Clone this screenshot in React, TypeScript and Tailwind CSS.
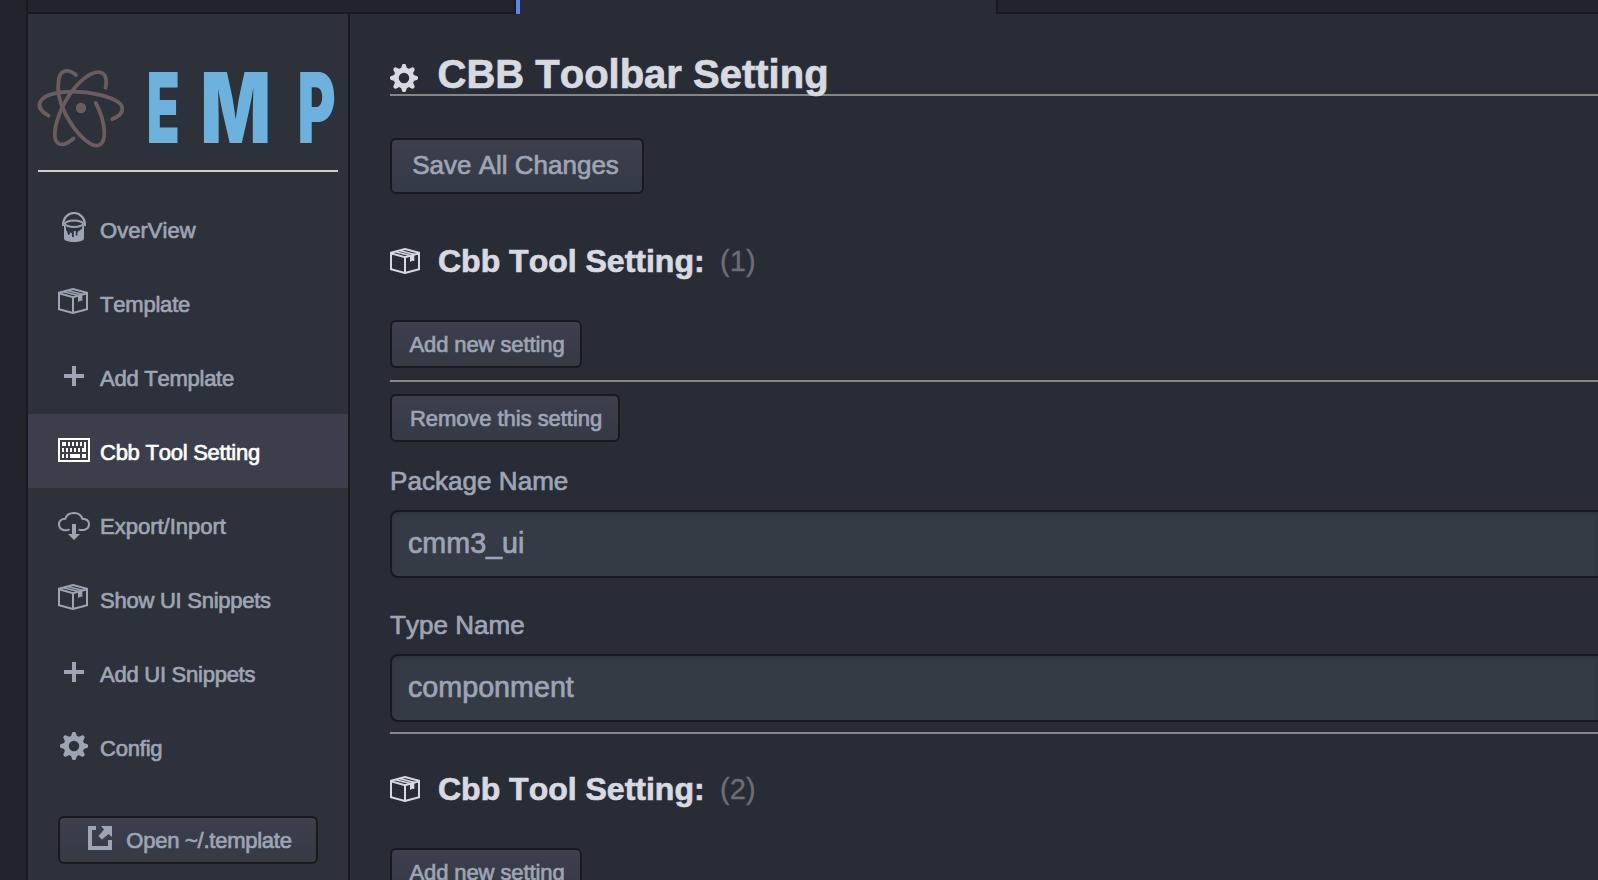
import type { ReactNode } from "react";

function Box({ className }: { className?: string }) {
  return (
    <svg className={className} width="30" height="26" viewBox="0 0 30 26" fill="none" stroke="currentColor" strokeWidth="2">
      <path d="M1 4.7 15 1l14 3.7v16.6L15 25 1 21.3zM1 5.200l14 4.100 14-4.100M15 9.300V25" />
      <path d="M6.200 4 20.500 7.600M10.200 2.700 24.800 6.400" strokeWidth="1.500" />
      <path d="M20 8l4.300-1.300v6.300L22.200 12.800 20 14z" fill="currentColor" stroke="none" />
    </svg>
  );
}

function Gear({ className }: { className?: string }) {
  return (
    <svg className={className} width="28" height="28" viewBox="0 0 28 28">
      <circle cx="14" cy="14" r="7.8" fill="none" stroke="currentColor" strokeWidth="5.200" />
      {[0, 45, 90, 135, 180, 225, 270, 315].map((a) => (
        <path key={a} d="M10.800 5 12 1.200Q12.300 0 13.300 0h1.400Q15.700 0 16 1.200L17.200 5z" fill="currentColor" transform={`rotate(${a} 14 14)`} />
      ))}
    </svg>
  );
}

function Plus() {
  return (
    <svg className="translate-y-px" width="20" height="20" viewBox="0 0 20 20" fill="currentColor">
      <path d="M8 0h4v8h8v4h-8v8H8v-8H0V8h8z" />
    </svg>
  );
}

function PaintCan() {
  return (
    <svg width="24" height="30" viewBox="0 0 24 30">
      <path d="M1.200 14V12a10.800 11 0 0 1 21.600 0v2" fill="none" stroke="currentColor" strokeWidth="2.200" />
      <ellipse cx="12" cy="11.800" rx="9" ry="3.200" fill="none" stroke="currentColor" strokeWidth="2" />
      <path d="M2 12l2 3V18.500c1 .3 1.300 1 1.500 2.500.3 2.500 2 2.500 2.400.5.200-1.500 1.700-1.500 2 0l.2 3.500h1.700V19h2v4.500h1.600v-3c.2-1.500 2-1.500 2.500-2.300.3-.8 1.200-1 2.100-1V15L22 12v14.500C22 28.500 17.500 30 12 30S2 28.500 2 26.500z" fill="currentColor" />
    </svg>
  );
}

function Keyboard() {
  return (
    <svg className="translate-y-px" width="32" height="24" viewBox="0 0 32 24" fill="currentColor" shapeRendering="crispEdges">
      <path fillRule="evenodd" d="M0 0h32v24H0zM2 2v20h28V2z" />
      <path d="M4 4h4v4H4zM10 4h2v4h-2zM14 4h2v4h-2zM18 4h2v4h-2zM22 4h2v4h-2zM26 4h2v10h-4v-4h2zM4 10h2v4H4zM8 10h2v4H8zM12 10h2v4h-2zM16 10h2v4h-2zM20 10h2v4h-2zM4 16h2v4H4zM8 16h2v4H8zM12 16h10v4H12zM24 16h4v4h-4z" />
    </svg>
  );
}

function CloudDownload() {
  return (
    <svg className="translate-y-[3px]" width="32" height="28" viewBox="0 0 32 28">
      <path d="M11.500 17.400C7.500 19.500 1 18 1 12.200 1 9 3.500 6.800 7.300 6.700 8.500 3 11.800 1 16 1s7.300 2 8.300 5.800C28.500 7 31 9 31 12.200c0 5-5.200 6.800-10.500 5.400" fill="none" stroke="currentColor" strokeWidth="2" />
      <path d="M14 12h4v10h4l-6 6-6-6h4z" fill="currentColor" />
    </svg>
  );
}

function External() {
  return (
    <svg className="-translate-y-0.5" width="24" height="24" viewBox="0 0 24 24" fill="currentColor">
      <path d="M0 0h8v4H4v16h16v-6h4v10H0z" />
      <path d="M13 0h11v11l-3.500-3L14 13.500 10.500 10 16 3.500z" />
    </svg>
  );
}

function Logo() {
  return (
    <svg className="overflow-visible" width="300" height="84" viewBox="38 66 300 84">
      <g fill="none" stroke="#6b5c60" strokeWidth="3.800" strokeLinecap="round">
        <path d="M48.500 115.700C33 107 38 95 61 92.300c25-3 58 5 61 14.700 1.500 6-3 9.500-9.700 12" />
        <path d="M76 75C70 69.500 61.500 68.500 59 78c-2.500 12 1 26 7 37 9 17 23 32 32 30.500 9-2 8.500-22-2.200-42.500" />
        <path d="M105.500 87.700C108 76 103.500 70.500 95 72.500 83 76 70 91 61.500 109c-7.500 17-9.500 32.500-2 35 4.500 1.200 9.500-1.500 14-5.500" />
      </g>
      <circle cx="81" cy="108" r="5.200" fill="#6b5c60" />
      <g fill="#6cb2dc" className="[-webkit-text-stroke:0]" stroke="none" fontFamily="Inter, sans-serif" fontWeight="900" fontSize="97">
        <text transform="translate(146.500 143) scale(.56 1)">E</text>
        <text transform="translate(200.500 143) scale(.76 1)">M</text>
        <text transform="translate(297.500 143) scale(.6 1)">P</text>
      </g>
    </svg>
  );
}

const items: { label: string; icon: ReactNode; tracking: string }[] = [
  { label: "OverView", icon: <PaintCan />, tracking: "tracking-[0.05px]" },
  { label: "Template", icon: <Box className="-translate-x-px" />, tracking: "tracking-[-0.2px]" },
  { label: "Add Template", icon: <Plus />, tracking: "tracking-[-0.25px]" },
  { label: "Cbb Tool Setting", icon: <Keyboard />, tracking: "tracking-[-0.25px]" },
  { label: "Export/Inport", icon: <CloudDownload />, tracking: "tracking-[0px]" },
  { label: "Show UI Snippets", icon: <Box className="-translate-x-px" />, tracking: "tracking-[-0.25px]" },
  { label: "Add UI Snippets", icon: <Plus />, tracking: "tracking-[-0.25px]" },
  { label: "Config", icon: <Gear className="translate-y-px" />, tracking: "tracking-[-0.2px]" },
];

const buttonBase =
  "flex items-center justify-center rounded-md border-2 border-[#181a1f] bg-linear-to-b from-[#3c3f4c] to-[#343b45] whitespace-nowrap";

function SmallButton({ children, className }: { children: ReactNode; className: string }) {
  return <button className={`${buttonBase} h-12 text-[22px] ${className}`}>{children}</button>;
}

function Field({ label, value }: { label: string; value: string }) {
  return (
    <label className="block">
      <span className="block h-[60px] pt-4 text-[26px] leading-[30px] tracking-[0.05px]">{label}</span>
      <span className="flex h-[68px] items-center rounded-l-lg border-y-2 border-l-2 border-[#181a1f] bg-[#343b45] px-4 text-[28.7px] shadow-[inset_0_2px_3px_rgba(0,0,0,0.15)]">
        {value}
      </span>
    </label>
  );
}

function SettingHeading({ index }: { index: number }) {
  return (
    <div className="flex h-[54px] items-center text-[#d7dae0]">
      <Box />
      <h2 className="ml-[18px] text-[32px] font-bold">Cbb Tool Setting:</h2>
      <span className="ml-[15.500px] pt-0.5 text-[29px] text-[#6b6f7b] [-webkit-text-stroke:0.3px]">({index})</span>
    </div>
  );
}

export default function App() {
  return (
    <div className="flex h-[880px] w-[1598px] overflow-hidden bg-[#282c34] font-['Liberation_Sans',Arial,sans-serif] text-[#9da5b4] [font-kerning:none] [-webkit-text-stroke:0.7px]">
      <div className="w-7 shrink-0 border-r-2 border-[#181a1f] bg-[#21252b]" />
      <div className="flex min-w-0 flex-1 flex-col">
        <div className="flex h-3.5 shrink-0">
          <div className="w-[488px] border-r-2 border-b-2 border-[#181a1f] bg-[#21252b]" />
          <div className="w-[480px] border-l-4 border-[#568af2] bg-[#282c34]" />
          <div className="flex-1 border-b-2 border-l-2 border-[#181a1f] bg-[#21252b]" />
        </div>
        <div className="flex min-h-0 flex-1">
          <aside className="w-[322px] shrink-0 border-r-2 border-[#181a1f] bg-[#2d3139]">
            <div className="mx-2.5 h-[158px] border-b-2 border-[#cfcfcd] pt-[52px]">
              <Logo />
            </div>
            <nav className="pt-5">
              {items.map(({ label, icon, tracking }) => (
                <div
                  key={label}
                  className={`flex h-[74px] items-center pl-[30px] ${label === "Cbb Tool Setting" ? "bg-[#3c3f4b] text-white" : ""}`}
                >
                  <span className="flex w-8 justify-center pb-1">{icon}</span>
                  <span className={`ml-[10px] pt-0.5 text-[22px] ${tracking}`}>{label}</span>
                </div>
              ))}
            </nav>
            <SmallButton className="mt-8 ml-[30px] w-[260px] gap-[14px] pl-1 tracking-[-0.25px]">
              <External />
              <span>Open ~/.template</span>
            </SmallButton>
          </aside>
          <main className="min-w-0 flex-1 pl-10">
            <div className="flex h-[82px] items-end border-b-2 border-[#858585] text-[#d7dae0]">
              <Gear className="mb-0.5" />
              <h1 className="ml-[19.500px] translate-y-[3px] text-[40px] leading-[46px] font-bold">CBB Toolbar Setting</h1>
            </div>
            <button className={`${buttonBase} mt-[42px] h-14 w-[254px] pr-[3px] pb-0.5 text-[26px]`}>Save All Changes</button>
            <div className="mt-10">
              <SettingHeading index={1} />
            </div>
            <SmallButton className="mt-8 w-48 pl-0.5 tracking-[-0.1px]">Add new setting</SmallButton>
            <section className="mt-3 border-y-2 border-[#858585] pt-3 pb-2.5">
              <SmallButton className="w-[230px] pl-0.5 tracking-[-0.05px]">Remove this setting</SmallButton>
              <div className="pt-2">
                <Field label="Package Name" value="cmm3_ui" />
                <div className="pt-4">
                  <Field label="Type Name" value="componment" />
                </div>
              </div>
            </section>
            <div className="mt-7">
              <SettingHeading index={2} />
            </div>
            <SmallButton className="mt-8 w-48 pl-0.5 tracking-[-0.1px]">Add new setting</SmallButton>
          </main>
        </div>
      </div>
    </div>
  );
}
